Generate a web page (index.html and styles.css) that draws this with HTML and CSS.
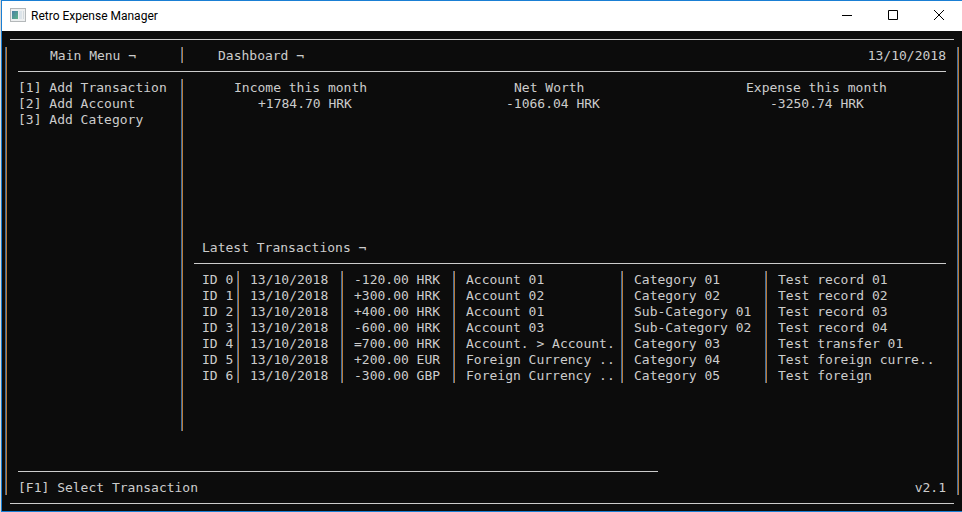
FILE: index.html
```html
<!DOCTYPE html>
<html lang="en">
<head>
<meta charset="utf-8">
<title>Retro Expense Manager</title>
<link rel="stylesheet" href="styles.css">
</head>
<body>
<div class="window">
  <header class="titlebar">
    <svg class="app-icon" width="16" height="14" viewBox="0 0 16 14" aria-hidden="true">
      <defs>
        <linearGradient id="pane" x1="0" y1="0" x2="1" y2="1">
          <stop offset="0" stop-color="#4a7fa5"/>
          <stop offset="1" stop-color="#5db488"/>
        </linearGradient>
      </defs>
      <rect x="0.5" y="0.5" width="15" height="13" fill="#eef0f1" stroke="#b4b8ba"/>
      <rect x="2" y="3" width="6" height="8" fill="url(#pane)"/>
      <rect x="9" y="3" width="3" height="8" fill="#dce4ea"/>
      <rect x="13" y="3" width="1" height="8" fill="#d3dade"/>
    </svg>
    <span class="app-name">Retro Expense Manager</span>
    <div class="controls">
      <button type="button" aria-label="Minimize"><svg width="10" height="10" viewBox="0 0 10 10"><path d="M0 5.5H10"/></svg></button>
      <button type="button" aria-label="Maximize"><svg width="10" height="10" viewBox="0 0 10 10"><path d="M.5.5H9.5V9.5H.5Z"/></svg></button>
      <button type="button" aria-label="Close"><svg width="10" height="10" viewBox="0 0 10 10"><path d="M0 0L10 10M10 0L0 10"/></svg></button>
    </div>
  </header>
  <main class="console">
    <hr class="outer">
    <div class="frame">
      <div class="head">
        <h2 class="menu-title divider">Main Menu ¬</h2>
        <h1>Dashboard ¬</h1>
        <time datetime="2018-10-13">13/10/2018</time>
      </div>
      <hr>
      <div class="body">
        <nav class="menu divider">
          <button type="button">[1] Add Transaction</button>
          <button type="button">[2] Add Account</button>
          <button type="button">[3] Add Category</button>
        </nav>
        <div class="content">
          <dl class="stats">
            <div><dt>Income this month</dt><dd class="in-3">+1784.70 HRK</dd></div>
            <div><dt class="in-1">Net Worth</dt><dd>-1066.04 HRK</dd></div>
            <div><dt>Expense this month</dt><dd class="in-3">-3250.74 HRK</dd></div>
          </dl>
          <section class="latest">
            <h2>Latest Transactions ¬</h2>
            <hr>
            <table>
              <colgroup><col class="c-id"><col class="c-date"><col class="c-amount"><col class="c-account"><col class="c-category"><col></colgroup>
              <tbody>
                <tr><td>ID 0</td><td>13/10/2018</td><td>-120.00 HRK</td><td>Account 01</td><td>Category 01</td><td>Test record 01</td></tr>
                <tr><td>ID 1</td><td>13/10/2018</td><td>+300.00 HRK</td><td>Account 02</td><td>Category 02</td><td>Test record 02</td></tr>
                <tr><td>ID 2</td><td>13/10/2018</td><td>+400.00 HRK</td><td>Account 01</td><td>Sub-Category 01</td><td>Test record 03</td></tr>
                <tr><td>ID 3</td><td>13/10/2018</td><td>-600.00 HRK</td><td>Account 03</td><td>Sub-Category 02</td><td>Test record 04</td></tr>
                <tr><td>ID 4</td><td>13/10/2018</td><td>=700.00 HRK</td><td>Account. &gt; Account.</td><td>Category 03</td><td>Test transfer 01</td></tr>
                <tr><td>ID 5</td><td>13/10/2018</td><td>+200.00 EUR</td><td>Foreign Currency ..</td><td>Category 04</td><td>Test foreign curre..</td></tr>
                <tr><td>ID 6</td><td>13/10/2018</td><td>-300.00 GBP</td><td>Foreign Currency ..</td><td>Category 05</td><td>Test foreign</td></tr>
              </tbody>
            </table>
          </section>
        </div>
      </div>
      <hr class="short">
      <footer class="foot">
        <button type="button">[F1] Select Transaction</button>
        <span>v2.1</span>
      </footer>
    </div>
    <hr class="outer">
  </main>
</div>
</body>
</html>
```
FILE: styles.css
```css
:root {
  --ink: #cccccc;
  --paper: #0c0c0c;
  --cool: #3f6f9f;
  --warm: #b87a38;
}

* { box-sizing: border-box; }

body {
  margin: 0;
  background: #dcd8d4;
}

.window {
  display: flex;
  flex-direction: column;
  min-height: 100vh;
  margin-left: 1px;
  border: solid #1a7fd4;
  border-width: 1px 0 1px 1px;
}

.titlebar {
  display: flex;
  align-items: center;
  height: 30px;
  padding: 0 0 2px 8px;
  background: #fff;
  color: #000;
  font: 12px/16px Roboto, "Open Sans", sans-serif;
}

.app-icon { margin-right: 5px; }

.app-name { padding-top: 2px; }

.controls {
  display: flex;
  align-self: stretch;
  margin-left: auto;
}

.controls button {
  display: flex;
  align-items: center;
  justify-content: center;
  width: 46px;
  padding: 0;
  border: 0;
  background: none;
}

.controls svg {
  fill: none;
  stroke: #000;
  overflow: visible;
}

.console {
  flex: 1;
  display: flex;
  flex-direction: column;
  background: var(--paper);
  color: var(--ink);
  font: 13px/14px "DejaVu Sans Mono", "Liberation Mono", monospace;
}

.console button {
  border: 0;
  background: none;
  color: inherit;
  font: inherit;
  text-align: left;
  white-space: nowrap;
}

h1, h2, dl, dd {
  margin: 0;
  font-size: inherit;
  font-weight: inherit;
}

/* Every text row is one 16px console line. */
.console button, h1, h2, time, dt, dd, td, .foot span {
  padding: 2px 0 0;
}

hr {
  height: 1px;
  margin: 8px 0 7px;
  border: 0;
  background: var(--ink);
}

.outer { margin: 8px 8px 7px; }

.frame {
  flex: 1;
  display: flex;
  flex-direction: column;
  margin: 0 3px;
  padding: 0 12px;
  border-left: 1px solid var(--cool);
  border-right: 1px solid var(--warm);
  box-shadow: inset 1px 0 var(--warm), inset -1px 0 var(--cool);
}

.divider {
  flex: none;
  width: 165px;
  border-right: 1px solid var(--warm);
  box-shadow: inset -1px 0 var(--cool);
}

.head { display: flex; }
.menu-title { padding-left: 32px; }
.head h1 { padding-left: 35px; }
.head time { margin-left: auto; }

.body {
  flex: 1;
  display: flex;
  margin-bottom: 32px;
}

.menu {
  display: flex;
  flex-direction: column;
}

.content {
  flex: 1;
  display: flex;
  flex-direction: column;
  justify-content: space-between;
}

.stats {
  display: grid;
  grid-template-columns: 17fr 15fr 9fr;
  padding: 0 56px 0 51px;
  white-space: nowrap;
}

.stats .in-1 { padding-left: 8px; }
.stats .in-3 { padding-left: 24px; }

.latest { padding: 0 0 48px 11px; }
.latest h2 { padding-left: 8px; }

table {
  width: 100%;
  table-layout: fixed;
  border-collapse: separate;
  border-spacing: 0;
  white-space: nowrap;
}

td {
  padding-left: 11px;
  border-right: 1px solid var(--warm);
  box-shadow: inset -1px 0 var(--cool);
}

td:first-child { padding-left: 8px; }

td:last-child {
  border-right: 0;
  box-shadow: none;
}

.c-id { width: 45px; }
.c-date { width: 104px; }
.c-amount { width: 112px; }
.c-account { width: 168px; }
.c-category { width: 144px; }

.short {
  width: 69%;
  margin-left: 0;
}

.foot {
  display: flex;
  justify-content: space-between;
}
```
